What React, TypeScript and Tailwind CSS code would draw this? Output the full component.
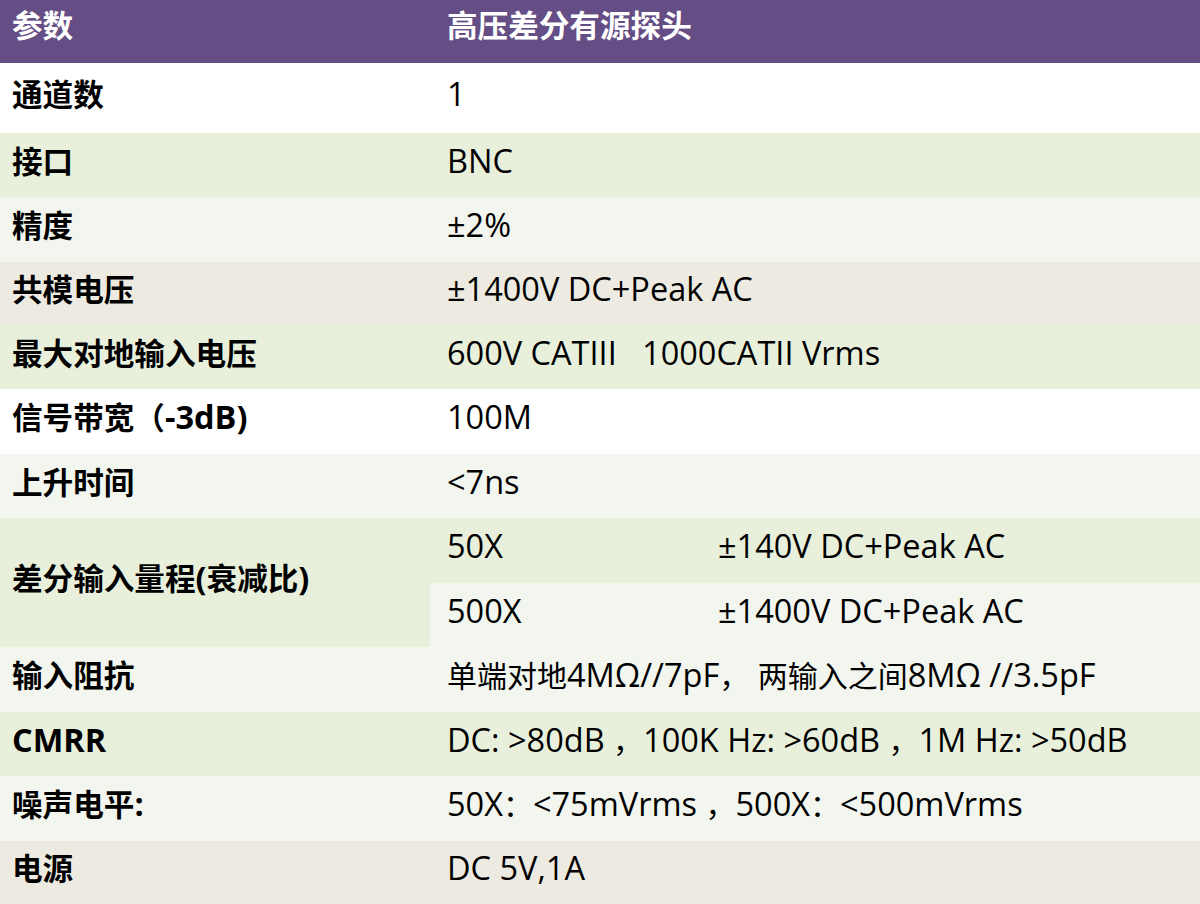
import React from "react";

type Row = { label: string; value: string; h: string; bg: string };

const FONT = "font-['Open_Sans','Noto_Sans_CJK_SC',sans-serif]";

const rowsTop: Row[] = [
  { label: "通道数", value: "1", h: "h-[70px]", bg: "bg-white" },
  { label: "接口", value: "BNC", h: "h-[64px]", bg: "bg-[#e8f0dc]" },
  { label: "精度", value: "±2%", h: "h-[65px]", bg: "bg-[#f3f6ee]" },
  { label: "共模电压", value: "±1400V DC+Peak AC", h: "h-[63px]", bg: "bg-[#edebe1]" },
  { label: "最大对地输入电压", value: "600V CATIII\u00a0\u00a0 1000CATII Vrms", h: "h-[64px]", bg: "bg-[#e8f0dc]" },
  { label: "信号带宽（-3dB)", value: "100M", h: "h-[65px]", bg: "bg-white" },
  { label: "上升时间", value: "<7ns", h: "h-[64px]", bg: "bg-[#f3f6ee]" },
];

const rowsBottom: Row[] = [
  { label: "输入阻抗", value: "单端对地4MΩ//7pF， 两输入之间8MΩ //3.5pF", h: "h-[65px]", bg: "bg-[#f3f6ee]" },
  { label: "CMRR", value: "DC: >80dB ，100K Hz: >60dB ，1M Hz: >50dB", h: "h-[64px]", bg: "bg-[#e8f0dc]" },
  { label: "噪声电平:", value: "50X：<75mVrms ，500X：<500mVrms", h: "h-[65px]", bg: "bg-[#f3f6ee]" },
  { label: "电源", value: "DC 5V,1A", h: "h-[63px]", bg: "bg-[#edebe1]" },
];

function Mixed({ text, bold }: { text: string; bold?: boolean }) {
  const parts = text.split(/([\u3000-\u9fff\uff00-\uffef]+)/).filter((p) => p.length > 0);
  return (
    <span className="whitespace-pre">
      {parts.map((p, i) =>
        /[\u3000-\u9fff\uff00-\uffef]/.test(p) ? (
          <span key={i} className={bold ? "text-[30.6px]" : "text-[30px]"}>{p}</span>
        ) : (
          <span key={i} className="text-[32.5px]">{p}</span>
        )
      )}
    </span>
  );
}

function SimpleRow({ r }: { r: Row }) {
  return (
    <div className={`flex ${r.h} ${r.bg}`}>
      <div className="w-[430px] flex items-center pl-[12px] pb-[8px] font-bold text-black">
        <Mixed text={r.label} bold />
      </div>
      <div className="flex-1 flex items-center pl-[17px] pb-[8px] text-black">
        <Mixed text={r.value} />
      </div>
    </div>
  );
}

export default function App() {
  return (
    <div className={`w-[1200px] h-[904px] overflow-hidden bg-white leading-none ${FONT}`}>
      <div className="flex h-[63px] bg-[#654e85] text-white font-bold">
        <div className="w-[430px] flex items-center pl-[12px] pb-[12px]">
          <Mixed text="参数" bold />
        </div>
        <div className="flex-1 flex items-center pl-[17px] pb-[12px]">
          <Mixed text="高压差分有源探头" bold />
        </div>
      </div>
      {rowsTop.map((r) => (
        <SimpleRow key={r.label} r={r} />
      ))}
      <div className="flex h-[129px]">
        <div className="w-[430px] flex items-center pl-[12px] pb-[8px] font-bold bg-[#e8f0dc] text-black">
          <Mixed text="差分输入量程(衰减比)" bold />
        </div>
        <div className="flex-1 flex flex-col text-black">
          <div className="flex h-[65px] items-center bg-[#e8f0dc] pl-[17px] pb-[8px]">
            <div className="w-[271px]">
              <Mixed text="50X" />
            </div>
            <Mixed text="±140V DC+Peak AC" />
          </div>
          <div className="flex h-[64px] items-center bg-[#f3f6ee] pl-[17px] pb-[8px]">
            <div className="w-[271px]">
              <Mixed text="500X" />
            </div>
            <Mixed text="±1400V DC+Peak AC" />
          </div>
        </div>
      </div>
      {rowsBottom.map((r) => (
        <SimpleRow key={r.label} r={r} />
      ))}
    </div>
  );
}
